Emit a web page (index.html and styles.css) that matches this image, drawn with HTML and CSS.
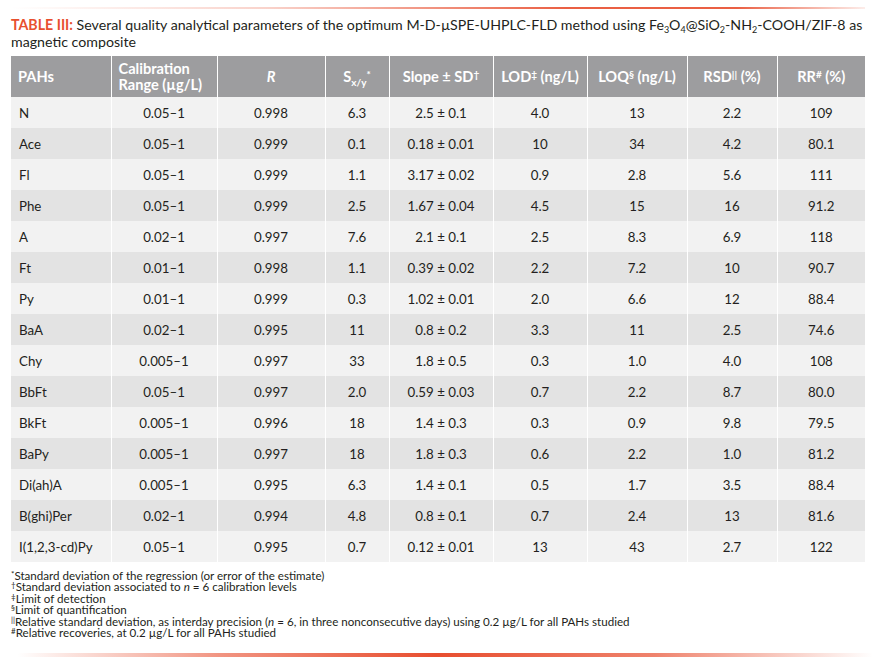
FILE: index.html
```html
<!DOCTYPE html>
<html>
<head>
<meta charset="utf-8">
<link rel="stylesheet" href="styles.css">
</head>
<body>
<div class="page">
  <div class="rule-top"></div>
  <p class="caption"><span class="label">TABLE III:</span> Several quality analytical parameters of the optimum M-D-µSPE-UHPLC-FLD method using Fe<sub>3</sub>O<sub>4</sub>@SiO<sub>2</sub>-NH<sub>2</sub>-COOH/ZIF-8 as magnetic composite</p>
  <table class="data">
    <colgroup>
      <col class="c1"><col class="c2"><col class="c3"><col class="c4"><col class="c5"><col class="c6"><col class="c7"><col class="c8"><col class="c9">
    </colgroup>
    <thead>
      <tr>
        <th class="left">PAHs</th>
        <th class="left">Calibration Range (µg/L)</th>
        <th><i>R</i></th>
        <th>S<sub>x/y</sub><sup>*</sup></th>
        <th>Slope ± SD<sup>†</sup></th>
        <th>LOD<sup>‡</sup> (ng/L)</th>
        <th>LOQ<sup>§</sup> (ng/L)</th>
        <th>RSD<sup>||</sup> (%)</th>
        <th>RR<sup>#</sup> (%)</th>
      </tr>
    </thead>
    <tbody>
      <tr><td>N</td><td>0.05–1</td><td>0.998</td><td>6.3</td><td>2.5 ± 0.1</td><td>4.0</td><td>13</td><td>2.2</td><td>109</td></tr>
      <tr><td>Ace</td><td>0.05–1</td><td>0.999</td><td>0.1</td><td>0.18 ± 0.01</td><td>10</td><td>34</td><td>4.2</td><td>80.1</td></tr>
      <tr><td>Fl</td><td>0.05–1</td><td>0.999</td><td>1.1</td><td>3.17 ± 0.02</td><td>0.9</td><td>2.8</td><td>5.6</td><td>111</td></tr>
      <tr><td>Phe</td><td>0.05–1</td><td>0.999</td><td>2.5</td><td>1.67 ± 0.04</td><td>4.5</td><td>15</td><td>16</td><td>91.2</td></tr>
      <tr><td>A</td><td>0.02–1</td><td>0.997</td><td>7.6</td><td>2.1 ± 0.1</td><td>2.5</td><td>8.3</td><td>6.9</td><td>118</td></tr>
      <tr><td>Ft</td><td>0.01–1</td><td>0.998</td><td>1.1</td><td>0.39 ± 0.02</td><td>2.2</td><td>7.2</td><td>10</td><td>90.7</td></tr>
      <tr><td>Py</td><td>0.01–1</td><td>0.999</td><td>0.3</td><td>1.02 ± 0.01</td><td>2.0</td><td>6.6</td><td>12</td><td>88.4</td></tr>
      <tr><td>BaA</td><td>0.02–1</td><td>0.995</td><td>11</td><td>0.8 ± 0.2</td><td>3.3</td><td>11</td><td>2.5</td><td>74.6</td></tr>
      <tr><td>Chy</td><td>0.005–1</td><td>0.997</td><td>33</td><td>1.8 ± 0.5</td><td>0.3</td><td>1.0</td><td>4.0</td><td>108</td></tr>
      <tr><td>BbFt</td><td>0.05–1</td><td>0.997</td><td>2.0</td><td>0.59 ± 0.03</td><td>0.7</td><td>2.2</td><td>8.7</td><td>80.0</td></tr>
      <tr><td>BkFt</td><td>0.005–1</td><td>0.996</td><td>18</td><td>1.4 ± 0.3</td><td>0.3</td><td>0.9</td><td>9.8</td><td>79.5</td></tr>
      <tr><td>BaPy</td><td>0.005–1</td><td>0.997</td><td>18</td><td>1.8 ± 0.3</td><td>0.6</td><td>2.2</td><td>1.0</td><td>81.2</td></tr>
      <tr><td>Di(ah)A</td><td>0.005–1</td><td>0.995</td><td>6.3</td><td>1.4 ± 0.1</td><td>0.5</td><td>1.7</td><td>3.5</td><td>88.4</td></tr>
      <tr><td>B(ghi)Per</td><td>0.02–1</td><td>0.994</td><td>4.8</td><td>0.8 ± 0.1</td><td>0.7</td><td>2.4</td><td>13</td><td>81.6</td></tr>
      <tr><td>I(1,2,3-cd)Py</td><td>0.05–1</td><td>0.995</td><td>0.7</td><td>0.12 ± 0.01</td><td>13</td><td>43</td><td>2.7</td><td>122</td></tr>
    </tbody>
  </table>
  <div class="notes">
    <p><sup>*</sup>Standard deviation of the regression (or error of the estimate)</p>
    <p><sup>†</sup>Standard deviation associated to <i>n</i> = 6 calibration levels</p>
    <p><sup>‡</sup>Limit of detection</p>
    <p><sup>§</sup>Limit of quantification</p>
    <p><sup>||</sup>Relative standard deviation, as interday precision (<i>n</i> = 6, in three nonconsecutive days) using 0.2 µg/L for all PAHs studied</p>
    <p><sup>#</sup>Relative recoveries, at 0.2 µg/L for all PAHs studied</p>
  </div>
  <div class="rule-bottom"></div>
</div>
</body>
</html>
```

FILE: styles.css
```css
* { box-sizing: border-box; }
html, body { margin: 0; padding: 0; background: #ffffff; }
body {
  font-family: "Lato", "Liberation Sans", sans-serif;
  color: #231f20;
}
.page {
  width: 873px;
  height: 666px;
  padding: 7px 8px 0 11px;
  display: flex;
  flex-direction: column;
}
.rule-top {
  height: 2px;
  background: linear-gradient(to right, rgba(232,78,47,0) 0%, rgba(232,78,47,0.25) 30%, rgba(232,78,47,0.9) 65%, rgba(232,78,47,0.9) 85%, rgba(232,78,47,0.1) 100%);
}
.caption {
  margin: 7px 0 0 0;
  font-size: 14.2px;
  line-height: 17px;
  color: #231f20;
}
.caption .label {
  color: #e8502f;
  font-weight: bold;
}
.caption sub { font-size: 9px; line-height: 0; vertical-align: -3px; }
.data {
  margin-top: 6px;
  width: 854px;
  border-collapse: collapse;
  table-layout: fixed;
  font-size: 13.3px;
}
.c1 { width: 100px; } .c2 { width: 106px; } .c3 { width: 108px; } .c4 { width: 64px; }
.c5 { width: 104px; } .c6 { width: 94px; } .c7 { width: 100px; } .c8 { width: 90px; } .c9 { width: 88px; }
.data th {
  background: #9d9d9f;
  color: #ffffff;
  font-weight: bold;
  font-size: 14.6px;
  line-height: 16px;
  height: 41px;
  padding: 0 7px;
  text-align: center;
  border-left: 1px solid #ffffff;
}
.data th.left { text-align: left; }
.data th:first-child, .data td:first-child { border-left: none; }
.data th sub { font-size: 10px; line-height: 0; vertical-align: -4px; }
.data th sup { font-size: 10px; line-height: 0; vertical-align: 4px; }
.data td {
  height: 31px;
  padding: 0 8px;
  text-align: center;
  border-left: 1px solid #ffffff;
  background: #f2f2f2;
}
.data td:first-child { text-align: left; }
.data tbody tr:nth-child(even) td { background: #e3e3e3; }
.notes {
  margin-top: 8px;
  font-size: 11.6px;
  line-height: 11.4px;
}
.notes p { margin: 0; }
.notes sup { font-size: 8px; line-height: 0; vertical-align: 3px; }
.rule-bottom {
  margin-top: 15px;
  margin-left: -11px;
  margin-right: -8px;
  height: 4px;
  background: linear-gradient(to right, rgba(232,78,47,0) 2%, rgba(232,78,47,0.6) 25%, rgba(232,78,47,1) 50%, rgba(232,78,47,0.7) 75%, rgba(232,78,47,0) 100%);
}
```
